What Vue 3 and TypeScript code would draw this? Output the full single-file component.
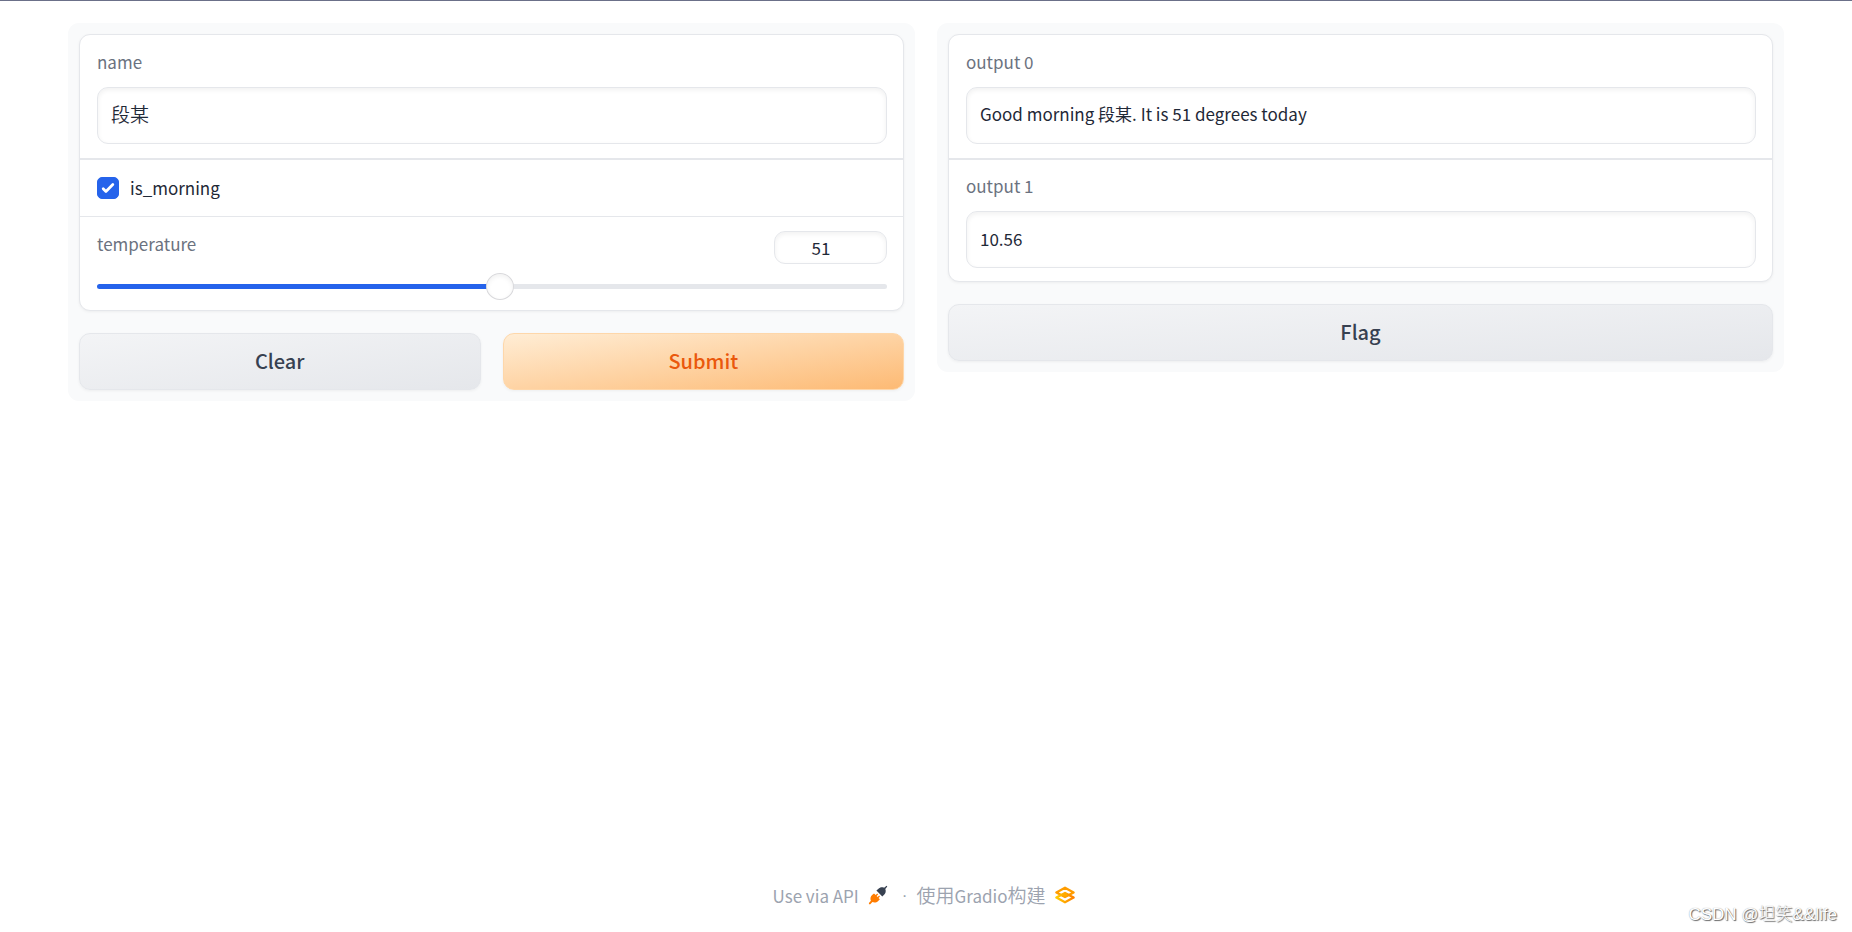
<script setup lang="ts">
import { computed, ref } from 'vue'

const name = ref('段某')
const isMorning = ref(true)
const temperature = ref(51)
const greeting = ref('Good morning 段某. It is 51 degrees today')
const celsius = ref('10.56')

const fill = computed(() => ({ '--fill': `${temperature.value}%` }))

function clearForm() {
  name.value = ''
  isMorning.value = false
  temperature.value = 0
  greeting.value = ''
  celsius.value = ''
}

function submitForm() {
  const salutation = isMorning.value ? 'Good morning' : 'Good evening'
  greeting.value = `${salutation} ${name.value}. It is ${temperature.value} degrees today`
  celsius.value = (((temperature.value - 32) * 5) / 9).toFixed(2)
}
</script>

<template>
  <div class="page">
    <main class="columns">
      <form class="panel" @submit.prevent="submitForm">
        <div class="card">
          <div class="block">
            <label class="caption" for="name">name</label>
            <input id="name" v-model="name" class="field han" type="text" />
          </div>
          <div class="block block-check">
            <label class="check">
              <input v-model="isMorning" type="checkbox" />
              <span>is_morning</span>
            </label>
          </div>
          <div class="block block-slider">
            <div class="slider-head">
              <label class="caption" for="temperature">temperature</label>
              <input
                v-model.number="temperature"
                class="field number"
                type="number"
                min="0"
                max="100"
                aria-label="temperature value"
              />
            </div>
            <input
              id="temperature"
              v-model.number="temperature"
              class="slider"
              type="range"
              min="0"
              max="100"
              :style="fill"
            />
          </div>
        </div>
        <div class="actions">
          <button class="btn" type="button" @click="clearForm">Clear</button>
          <button class="btn primary" type="submit">Submit</button>
        </div>
      </form>

      <section class="panel">
        <div class="card">
          <div class="block">
            <label class="caption" for="output-0">output 0</label>
            <input id="output-0" class="field" type="text" readonly :value="greeting" />
          </div>
          <div class="block block-second">
            <label class="caption" for="output-1">output 1</label>
            <input id="output-1" class="field figure" type="text" readonly :value="celsius" />
          </div>
        </div>
        <div class="actions">
          <button class="btn" type="button">Flag</button>
        </div>
      </section>
    </main>

    <footer class="footer">
      <a href="#api">
        <span>Use via API</span>
        <svg class="icon" viewBox="0 0 20 20" aria-hidden="true">
          <path d="M18.600.8 19.300 1.500 17.300 3.900c.9 2.100.4 4.300-1.200 5.900l-1.800 1.700L8.400 5.600l1.800-1.700c1.700-1.600 3.900-2 5.900-1.100z" fill="#374151" />
          <path d="m6 8.400 1.700 1.700L9.200 8.600l.9.900-1.500 1.500 1 1 1.500-1.500.9.900-1.500 1.500 1.400 1.400-1.700 1.700c-1.600 1.600-3.900 2-5.800 1.100L2.300 19.300 1 19.200l-.1-1.300 2-2.200c-.9-1.900-.5-4.200 1.200-5.800z" fill="#ff7c00" />
        </svg>
      </a>
      <span class="dot">·</span>
      <a href="#gradio">
        <span><span class="han">使用</span>Gradio<span class="han">构建</span></span>
        <svg class="icon" viewBox="0 0 20 20" aria-hidden="true">
          <defs>
            <linearGradient id="gold" x1="0" x2="1" y1="0" y2="0">
              <stop offset="0" stop-color="#ffcc00" />
              <stop offset="1" stop-color="#ff8000" />
            </linearGradient>
          </defs>
          <g fill="none" stroke="url(#gold)" stroke-width="2.300" stroke-linejoin="round">
            <path d="M1.400 7.400 10 2.700l8.600 4.700L10 12.100z" stroke="#ff9d00" />
            <path d="M1.400 12.600 10 7.900l8.600 4.700L10 17.300z" />
          </g>
          <ellipse cx="10" cy="10" rx="2.400" ry="1.700" fill="#ffab00" />
        </svg>
      </a>
    </footer>

    <div class="watermark">CSDN @坦笑&amp;&amp;life</div>
  </div>
</template>

<style>
body {
  margin: 0;
  background: #fff;
}
</style>

<style scoped>
.page {
  box-sizing: border-box;
  min-height: 100vh;
  display: flex;
  flex-direction: column;
  padding: 22px 68px 24px;
  border-top: 1px solid #6b7089;
  font-family: "Noto Sans CJK SC", "Noto Sans", sans-serif;
  font-size: 17px;
  line-height: 25px;
  color: #1f2937;
}
.columns {
  flex: 1;
  display: flex;
  align-items: flex-start;
  gap: 22px;
}
.panel {
  box-sizing: border-box;
  flex: 1 1 0;
  min-width: 0;
  display: flex;
  flex-direction: column;
  gap: 22px;
  padding: 11px;
  border-radius: 11px;
  background: #f9fafb;
}
.card {
  border: 1px solid #e5e7eb;
  border-radius: 11px;
  background: #fff;
  box-shadow: 0 1px 3px rgba(0, 0, 0, 0.05);
}
.block {
  padding: 14px 16px 14px 17px;
}
.block-check {
  border-top: 2px solid #e5e7eb;
}
.block-second {
  padding-top: 13px;
  padding-bottom: 13px;
  border-top: 2px solid #e5e7eb;
}
.block-slider {
  padding-bottom: 10px;
  border-top: 1px solid #e5e7eb;
}
.caption {
  display: block;
  margin-bottom: 13px;
  color: #6b7280;
}
.field {
  box-sizing: border-box;
  display: block;
  width: 100%;
  height: 57px;
  margin: 0;
  padding: 0 13px 4px;
  border: 1px solid #e5e7eb;
  border-radius: 11px;
  background: #fff;
  box-shadow: inset 0 2px 5px rgba(0, 0, 0, 0.06);
  font: inherit;
  color: inherit;
  outline: none;
}
.field.figure {
  padding-bottom: 2px;
}
.han,
.field.han {
  font-size: 19px;
  font-weight: 350;
}
.check {
  display: flex;
  align-items: center;
  gap: 11px;
  height: 28px;
  width: fit-content;
}
.check span {
  padding-bottom: 2px;
}
.check input {
  appearance: none;
  width: 22px;
  height: 22px;
  margin: 0;
  border-radius: 5px;
  border: 1px solid #d1d5db;
  background: #fff;
}
.check input:checked {
  border-color: #2563eb;
  background: #2563eb url("data:image/svg+xml,%3Csvg viewBox='0 0 16 16' fill='white' xmlns='http://www.w3.org/2000/svg'%3E%3Cpath d='M12.207 4.793a1 1 0 010 1.414l-5 5a1 1 0 01-1.414 0l-2-2a1 1 0 011.414-1.414L6.500 9.086l4.293-4.293a1 1 0 011.414 0z'/%3E%3C/svg%3E") border-box center / 22px no-repeat;
}
.slider-head {
  display: flex;
  justify-content: space-between;
  align-items: flex-start;
}
.slider-head .caption {
  margin: 0;
}
.field.number {
  width: 113px;
  height: 33px;
  padding: 0 19px 0 0;
  text-align: center;
  appearance: textfield;
}
.number::-webkit-inner-spin-button {
  appearance: none;
  margin: 0;
}
.slider {
  appearance: none;
  display: block;
  width: 100%;
  height: 27px;
  margin: 9px 0 0;
  background: transparent;
}
.slider::-webkit-slider-runnable-track {
  height: 5px;
  border-radius: 3px;
  background: linear-gradient(#2563eb, #2563eb) 0 0 / var(--fill) 100% no-repeat #e5e7eb;
}
.slider::-webkit-slider-thumb {
  appearance: none;
  box-sizing: border-box;
  width: 28px;
  height: 27px;
  margin-top: -11px;
  border: 1px solid #d9d9dc;
  border-radius: 50%;
  background: #fff;
  box-shadow: inset 0 2px 5px rgba(0, 0, 0, 0.06);
}
.actions {
  display: flex;
  gap: 22px;
}
.btn {
  flex: 1 1 0;
  height: 57px;
  padding: 0 0 3px;
  border: 1px solid #e5e7eb;
  border-radius: 11px;
  background: linear-gradient(to bottom right, #f3f4f6, #e5e7eb);
  box-shadow: 0 1px 3px rgba(0, 0, 0, 0.05);
  font: inherit;
  font-size: 20px;
  font-weight: 500;
  color: #374151;
}
.btn.primary {
  border-color: #fed7aa;
  background: linear-gradient(to bottom right, #ffedd5, #fdba74);
  color: #ea580c;
}
.footer {
  display: flex;
  justify-content: center;
  align-items: center;
  gap: 9px;
  color: #9ca3af;
}
.footer a {
  display: flex;
  align-items: center;
  gap: 9px;
  color: inherit;
  text-decoration: none;
}
.dot {
  font-family: "Liberation Sans", sans-serif;
}
.icon {
  width: 20px;
  height: 20px;
  margin-right: 5px;
}
.watermark {
  position: absolute;
  right: 15px;
  bottom: 5px;
  font-family: "Liberation Sans", "Noto Sans CJK SC", sans-serif;
  font-size: 17px;
  font-weight: 300;
  color: #fff;
  text-shadow: 1px 1px 1px #666, 0 0 1px #999;
}
</style>
